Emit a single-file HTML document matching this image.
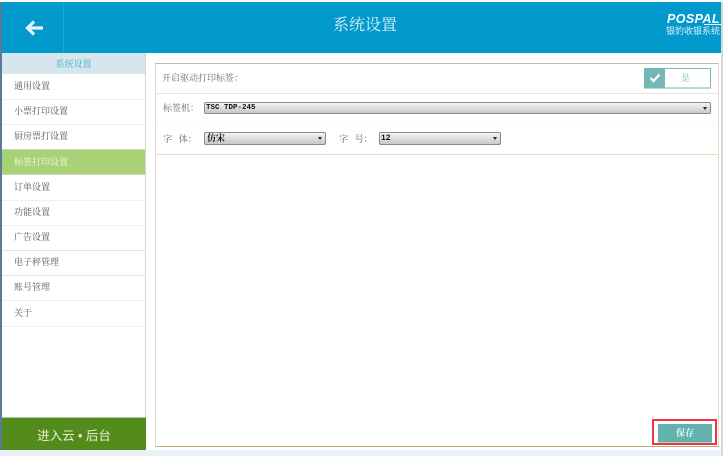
<!DOCTYPE html>
<html>
<head>
<meta charset="utf-8">
<style>
html,body{margin:0;padding:0;width:723px;height:456px;overflow:hidden;background:#fff;font-family:"Liberation Serif","Noto Serif CJK SC",serif;}
.a{position:absolute;}
.item{position:absolute;left:2px;width:143px;height:25px;border-bottom:1px solid #f0f0ec;font-size:9px;line-height:25px;color:#555;text-indent:12px;filter:blur(.3px);}
.sel{position:absolute;background:linear-gradient(#f4f4f4,#dcdcdc 55%,#c8c8c8);border:1px solid #8a8a8a;border-radius:2px;box-sizing:border-box;font-size:8px;color:#111;font-weight:bold;padding-left:1px;white-space:nowrap;}
.sel:after{content:"";position:absolute;right:3px;top:4px;width:0;height:0;border-left:2px solid transparent;border-right:2px solid transparent;border-top:3px solid #222;}
.lb{position:absolute;font-size:9px;color:#666;white-space:pre;filter:blur(.25px);}
</style>
</head>
<body>
<div class="a" style="left:0;top:0;width:723px;height:456px;background:#fff"></div>

<!-- header -->
<div class="a" style="left:1px;top:2px;width:720px;height:51px;background:#0299cc"></div>
<div class="a" style="left:63px;top:2px;width:1px;height:51px;background:#19a8d6"></div>
<svg class="a" style="left:24px;top:19px" width="20" height="18" viewBox="0 0 20 18"><path d="M19 9H4M10 2.500 3.500 9l6.500 6.500" fill="none" stroke="#e6f4f9" stroke-width="3.200"/></svg>
<div class="a" style="left:300px;top:16px;width:130px;text-align:center;font-size:16px;line-height:20px;color:#dff1f8;">系统设置</div>
<div class="a" style="left:667px;top:13px;width:54px;height:12px;overflow:hidden;font-family:'Liberation Sans',sans-serif;font-size:12.500px;line-height:12px;font-weight:bold;font-style:italic;color:#fff;letter-spacing:.4px;">POSPAL</div>
<div class="a" style="left:704px;top:24px;width:17px;height:1px;background:#fff"></div>
<div class="a" style="left:666px;top:26px;font-size:9px;line-height:10px;color:#d8eff7;white-space:nowrap;font-family:'Liberation Sans','Noto Sans CJK SC',sans-serif;">银豹收银系统</div>

<!-- left edge / right edge -->
<div class="a" style="left:0;top:2px;width:2px;height:448px;background:#5b7a98"></div>
<div class="a" style="left:721px;top:2px;width:2px;height:454px;background:#d8d8d8"></div>
<div class="a" style="left:145px;top:53px;width:1px;height:365px;background:#d4d4d4"></div>

<!-- sidebar -->
<div class="a" style="left:2px;top:53px;width:143px;height:21px;background:#d6e6ec;text-align:center;font-size:9px;line-height:22px;color:#3fb1d3;">系统设置</div>
<div class="item" style="top:74px">通用设置</div>
<div class="item" style="top:99px">小票打印设置</div>
<div class="item" style="top:124px">厨房票打设置</div>
<div class="item" style="top:149px;height:24px;background:#a9d277;color:#f4f9ec;border-top:1px solid #c8d8b8;border-bottom:1px solid #c8d8b8;">标签打印设置</div>
<div class="item" style="top:175px">订单设置</div>
<div class="item" style="top:200px">功能设置</div>
<div class="item" style="top:225px;border-bottom-color:#e2e2dc">广告设置</div>
<div class="item" style="top:250px;border-bottom-color:#e2e2dc">电子秤管理</div>
<div class="item" style="top:275px">账号管理</div>
<div class="item" style="top:301px">关于</div>

<div class="a" style="left:2px;top:417px;width:144px;height:33px;background:#548c1c;border-top:1px solid #a9c9a9;box-sizing:border-box;text-align:center;font-size:12.500px;line-height:36px;color:#e6f0da;font-family:'Liberation Sans','Noto Sans CJK SC',sans-serif;">进入云 • 后台</div>
<div class="a" style="left:0;top:450px;width:721px;height:6px;background:#e9f0f8"></div>

<!-- panel -->
<div class="a" style="left:155px;top:63px;width:564px;height:384px;box-sizing:border-box;border:1px solid #e4d8ca;border-top-color:#c8b8a4;border-bottom:1px solid #c9a878;background:#fff"></div>
<div class="a" style="left:156px;top:93px;width:562px;height:1px;background:#e8e2d8"></div>
<div class="a" style="left:156px;top:154px;width:562px;height:1px;background:#f0d8c0"></div>
<div class="a" style="left:156px;top:124px;width:562px;height:1px;background:#fafafa"></div>

<div class="lb" style="left:162px;top:72px;line-height:12px">开启驱动打印标签：</div>
<div class="a" style="left:644px;top:68px;width:67px;height:21px;box-sizing:border-box;border:1px solid #7ab9b6;border-bottom:2px solid #b4dbdc;background:#fff;"></div>
<div class="a" style="left:644px;top:68px;width:21px;height:20px;background:#75b7b5"></div>
<svg class="a" style="left:649px;top:73px" width="12" height="10" viewBox="0 0 12 10"><path d="M1.500 5 4.500 8 10.500 1.500" fill="none" stroke="#fff" stroke-width="2.200"/></svg>
<div class="a" style="left:681px;top:72px;font-size:9px;line-height:12px;color:#7ab9b6;">是</div>

<div class="lb" style="left:163px;top:102px;line-height:12px">标签机：</div>
<div class="sel" style="left:204px;top:102px;width:507px;height:12px;line-height:10px;font-family:'Liberation Mono',monospace;font-size:7.500px">TSC TDP-245</div>

<div class="lb" style="left:163px;top:133px;line-height:12px">字   体：</div>
<div class="sel" style="left:204px;top:132px;width:122px;height:13px;line-height:11px;font-size:9px;padding-left:2px">仿宋</div>
<div class="lb" style="left:339px;top:133px;line-height:12px">字   号：</div>
<div class="sel" style="left:379px;top:132px;width:122px;height:13px;line-height:11px;font-size:8px;font-family:'Liberation Mono',monospace;padding-left:1px">12</div>

<!-- save -->
<div class="a" style="left:658px;top:424px;width:54px;height:18px;background:#62b3ae;border-bottom:1px solid #a8d4d2;text-align:center;font-size:9px;line-height:18px;color:#e8f5f4;font-weight:bold;">保存</div>
<div class="a" style="left:652px;top:419px;width:65px;height:26px;box-sizing:border-box;border:2px solid #ea3a3f;"></div>
</body>
</html>
